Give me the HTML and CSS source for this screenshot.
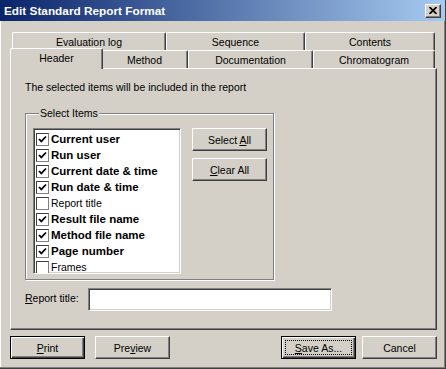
FILE: index.html
```html
<!DOCTYPE html>
<html>
<head>
<meta charset="utf-8">
<title>Edit Standard Report Format</title>
<link rel="stylesheet" href="styles.css">
</head>
<body>
<div class="window">
  <div class="titlebar">
    <span class="title">Edit Standard Report Format</span>
    <span class="close"><svg width="8" height="7" viewBox="0 0 8 7"><path d="M0.5 0 L7.5 7 M7.5 0 L0.5 7" stroke="#000" stroke-width="1.7" fill="none"/></svg></span>
  </div>
  <div class="tabs">
    <div class="tabrow back">
      <div class="tab t-eval">Evaluation log</div>
      <div class="tab t-seq">Sequence</div>
      <div class="tab t-cont">Contents</div>
    </div>
    <div class="tabrow front">
      <div class="tab t-header selected">Header</div>
      <div class="tab t-method">Method</div>
      <div class="tab t-doc">Documentation</div>
      <div class="tab t-chrom">Chromatogram</div>
    </div>
  </div>
  <div class="panel">
    <p class="intro">The selected items will be included in the report</p>
    <div class="group">
      <div class="legend">Select Items</div>
      <div class="group-body">
        <ul class="list">
          <li class="item bold"><span class="cb checked"><svg width="11" height="11" viewBox="0 0 11 11"><path d="M2 5 L4.3 7.4 L9 2.5" stroke="#000" stroke-width="1.7" fill="none"/></svg></span>Current user</li>
          <li class="item bold"><span class="cb checked"><svg width="11" height="11" viewBox="0 0 11 11"><path d="M2 5 L4.3 7.4 L9 2.5" stroke="#000" stroke-width="1.7" fill="none"/></svg></span>Run user</li>
          <li class="item bold"><span class="cb checked"><svg width="11" height="11" viewBox="0 0 11 11"><path d="M2 5 L4.3 7.4 L9 2.5" stroke="#000" stroke-width="1.7" fill="none"/></svg></span>Current date &amp; time</li>
          <li class="item bold"><span class="cb checked"><svg width="11" height="11" viewBox="0 0 11 11"><path d="M2 5 L4.3 7.4 L9 2.5" stroke="#000" stroke-width="1.7" fill="none"/></svg></span>Run date &amp; time</li>
          <li class="item"><span class="cb"></span>Report title</li>
          <li class="item bold"><span class="cb checked"><svg width="11" height="11" viewBox="0 0 11 11"><path d="M2 5 L4.3 7.4 L9 2.5" stroke="#000" stroke-width="1.7" fill="none"/></svg></span>Result file name</li>
          <li class="item bold"><span class="cb checked"><svg width="11" height="11" viewBox="0 0 11 11"><path d="M2 5 L4.3 7.4 L9 2.5" stroke="#000" stroke-width="1.7" fill="none"/></svg></span>Method file name</li>
          <li class="item bold"><span class="cb checked"><svg width="11" height="11" viewBox="0 0 11 11"><path d="M2 5 L4.3 7.4 L9 2.5" stroke="#000" stroke-width="1.7" fill="none"/></svg></span>Page number</li>
          <li class="item"><span class="cb"></span>Frames</li>
        </ul>
        <div class="side-buttons">
          <button class="btn"><span>Select <u>A</u>ll</span></button>
          <button class="btn"><span><u>C</u>lear All</span></button>
        </div>
      </div>
    </div>
    <div class="title-row">
      <label class="label"><u>R</u>eport title:</label>
      <div class="input"></div>
    </div>
  </div>
  <div class="bottom-buttons">
    <button class="btn default"><span><u>P</u>rint</span></button>
    <button class="btn preview"><span>Pre<u>v</u>iew</span></button>
    <button class="btn default save"><span class="focusring"><span><u>S</u>ave As...</span></span></button>
    <button class="btn cancel"><span>Cancel</span></button>
  </div>
</div>
</body>
</html>
```
FILE: styles.css
```css
body {
  margin: 0;
  background: #d4d0c8;
  font-family: "Liberation Sans", Arial, sans-serif;
  color: #000;
}

.window {
  width: 446px;
  height: 369px;
  box-sizing: border-box;
  background: #d4d0c8;
  border-right: 1px solid #404040;
  border-bottom: 1px solid #404040;
  box-shadow: inset -1px -1px #808080, inset 1px 0 #fff;
  display: flex;
  flex-direction: column;
}

.titlebar {
  height: 21px;
  display: flex;
  align-items: center;
  padding: 0 4px 0 4px;
  background: linear-gradient(to right, #0a246a, #a6caf0);
  color: #fff;
}

.title {
  font-weight: bold;
  font-size: 11.8px;
}

.close {
  margin-left: auto;
  width: 16px;
  height: 14px;
  box-sizing: border-box;
  background: #d4d0c8;
  border-top: 1px solid #fff;
  border-left: 1px solid #fff;
  border-right: 1px solid #404040;
  border-bottom: 1px solid #404040;
  box-shadow: inset -1px -1px #808080;
  display: flex;
  align-items: center;
  justify-content: center;
}

.close svg {
  display: block;
}

.tabs {
  margin-top: 11px;
}

.tabrow {
  display: flex;
  padding-left: 12px;
  height: 18px;
}

.tab {
  box-sizing: border-box;
  height: 18px;
  border-left: 1px solid #fff;
  border-top: 1px solid #fff;
  border-right: 1px solid #404040;
  box-shadow: inset -1px 0 #808080;
  border-radius: 2px 2px 0 0;
  background: #d4d0c8;
  font-size: 10.5px;
  display: flex;
  align-items: center;
  justify-content: center;
}

.t-eval { width: 154px; }
.t-seq { width: 139px; }
.t-cont { width: 130px; }

.t-header { width: 89px; }
.t-method { width: 87px; }
.t-doc { width: 125px; }
.t-chrom { width: 122px; }

.selected {
  position: relative;
  z-index: 1;
  width: 93px;
  height: 21px;
  margin: -2px -2px 0 -2px;
  padding-bottom: 3px;
}

.panel {
  margin-left: 10px;
  width: 427px;
  height: 262px;
  box-sizing: border-box;
  border-top: 1px solid #fff;
  border-left: 1px solid #fff;
  border-right: 1px solid #404040;
  border-bottom: 1px solid #404040;
  box-shadow: inset -1px -1px #808080;
  padding: 12px 0 0 14px;
}

.intro {
  margin: 0;
  font-size: 10.5px;
  line-height: 12px;
}

.group {
  margin-top: 20px;
  width: 249px;
  box-sizing: border-box;
  border: 1px solid #808080;
  box-shadow: inset 1px 1px #fff, 1px 1px #fff;
  padding: 0 0 5px 7px;
}

.legend {
  margin: -7px 0 0 6px;
  padding: 0 1px;
  width: fit-content;
  background: #d4d0c8;
  font-size: 10.5px;
  line-height: 13px;
}

.group-body {
  display: flex;
  gap: 11px;
  margin-top: 8px;
}

.list {
  list-style: none;
  margin: 0;
  padding: 2px 0 0 2px;
  width: 148px;
  height: 146px;
  box-sizing: border-box;
  background: #fff;
  border: 1px solid;
  border-color: #808080 #fff #fff #808080;
  box-shadow: inset 1px 1px #404040, inset -1px -1px #d4d0c8;
  overflow: hidden;
}

.item {
  height: 16px;
  display: flex;
  align-items: center;
  font-size: 10.5px;
  white-space: nowrap;
}

.item.bold {
  font-weight: bold;
  font-size: 11.5px;
}

.cb {
  width: 13px;
  height: 13px;
  box-sizing: border-box;
  flex: none;
  margin-right: 2px;
  background: #fff;
  border: 1px solid;
  border-color: #404040 #808080 #808080 #404040;
  display: flex;
  align-items: center;
  justify-content: center;
}

.cb svg {
  display: block;
}

.side-buttons {
  display: flex;
  flex-direction: column;
  gap: 7px;
}

.btn {
  width: 75px;
  height: 23px;
  box-sizing: border-box;
  flex: none;
  margin: 0;
  padding: 0;
  background: #d4d0c8;
  border: 1px solid;
  border-color: #fff #404040 #404040 #fff;
  box-shadow: inset -1px -1px #808080;
  font-family: "Liberation Sans", Arial, sans-serif;
  font-size: 10.5px;
  color: #000;
  display: flex;
  align-items: center;
  justify-content: center;
}

.btn.default {
  border: 1px solid #000;
  box-shadow: inset 1px 1px #fff, inset -1px -1px #404040, inset -2px -2px #808080;
}

.focusring {
  flex: 1;
  align-self: stretch;
  margin: 3px;
  border: 1px dotted #000;
  display: flex;
  align-items: center;
  justify-content: center;
}

.title-row {
  display: flex;
  align-items: center;
  margin-top: 8px;
}

.label {
  width: 63px;
  font-size: 10.5px;
  margin-top: -3px;
}

.input {
  width: 244px;
  height: 23px;
  box-sizing: border-box;
  background: #fff;
  border: 1px solid;
  border-color: #808080 #fff #fff #808080;
  box-shadow: inset 1px 1px #404040, inset -1px -1px #d4d0c8;
}

.bottom-buttons {
  display: flex;
  margin-top: 6px;
  padding: 0 8px 0 10px;
}

.preview {
  margin-left: 10px;
}

.save {
  margin-left: auto;
}

.cancel {
  margin-left: 6px;
}
```
